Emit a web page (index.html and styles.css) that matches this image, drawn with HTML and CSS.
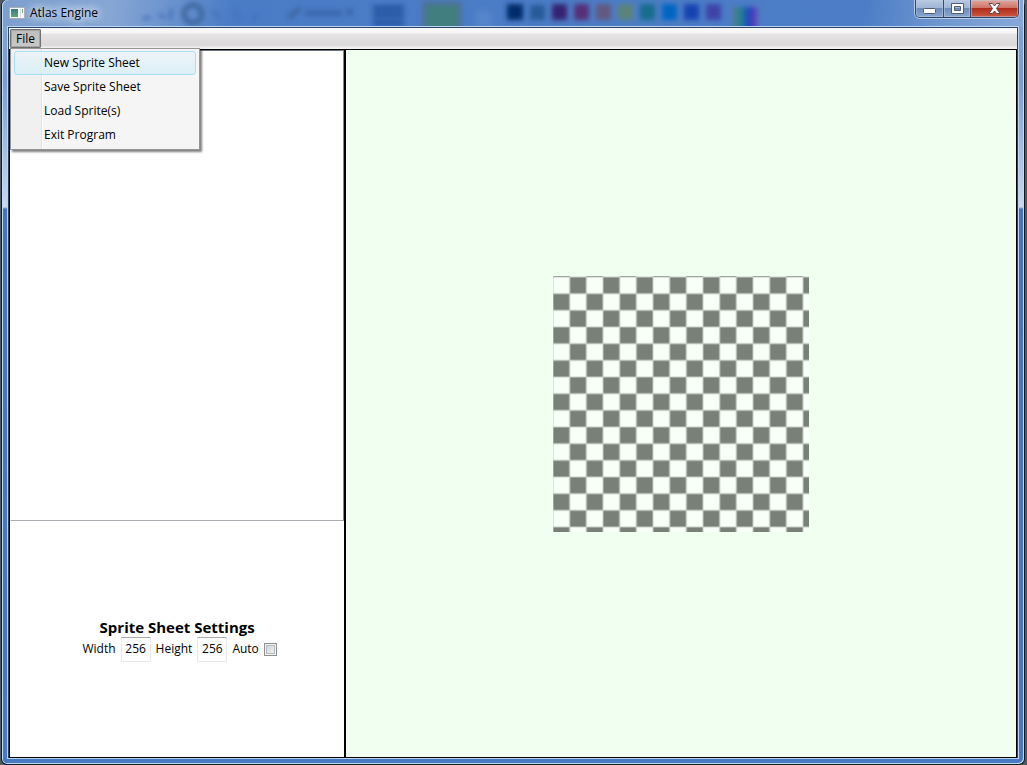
FILE: index.html
```html
<!DOCTYPE html>
<html lang="en">
<head>
<meta charset="utf-8">
<title>Atlas Engine</title>
<link rel="stylesheet" href="styles.css">
</head>
<body>
<div class="window">
  <header class="titlebar">
    <svg class="glass" width="1027" height="26" aria-hidden="true">
      <defs>
        <filter id="soft" x="-20%" y="-50%" width="140%" height="200%"><feGaussianBlur stdDeviation="2.500"/></filter>
        <linearGradient id="rainbow">
          <stop offset="0" stop-color="#5b7590"/><stop offset=".3" stop-color="#23858f"/>
          <stop offset=".6" stop-color="#174bc0"/><stop offset=".8" stop-color="#4a35bd"/><stop offset="1" stop-color="#6a62bd"/>
        </linearGradient>
      </defs>
      <g filter="url(#soft)">
        <circle cx="193" cy="14" r="9" fill="none" stroke="#3d689f" stroke-width="5"/>
        <path d="M142 18h9M158 14l8 4M171 8v12M212 10l9 9M234 10l5 9M251 17h8" stroke="#4370b6" stroke-width="3"/>
        <path d="M289 18l11-10" stroke="#3a639b" stroke-width="4"/>
        <path d="M305 13h37M346 12h7" stroke="#3b66ac" stroke-width="6"/>
        <path d="M373 8h31M373 15h31M373 23h31" stroke="#2859a4" stroke-width="6"/>
        <rect x="424" y="3" width="36" height="28" fill="#3f7f7e" stroke="#50719b" stroke-width="4"/>
        <rect x="476" y="10" width="16" height="18" fill="#5584ca"/>
        <rect x="507" y="4" width="16" height="16" fill="#002c6b"/>
        <rect x="530" y="5" width="15" height="15" fill="#285a98"/>
        <rect x="552" y="4" width="15" height="16" fill="#35246f"/>
        <rect x="574" y="4" width="15" height="16" fill="#592f78"/>
        <rect x="596" y="4" width="15" height="16" fill="#63597e"/>
        <rect x="618" y="4" width="15" height="16" fill="#5c8377"/>
        <rect x="640" y="4" width="15" height="16" fill="#126d8c"/>
        <rect x="662" y="4" width="15" height="16" fill="#0565c3"/>
        <rect x="684" y="4" width="15" height="16" fill="#1943b3"/>
        <rect x="706" y="4" width="15" height="16" fill="#3c43a8"/>
        <rect x="733" y="7" width="25" height="24" fill="url(#rainbow)"/>
      </g>
    </svg>
    <svg class="app-icon" width="16" height="12" viewBox="0 0 16 12" aria-hidden="true">
      <defs><linearGradient id="app" x2="0" y2="1"><stop stop-color="#347a8b"/><stop offset="1" stop-color="#60a770"/></linearGradient></defs>
      <rect x=".5" y=".5" width="15" height="11" fill="#f7f8f8" stroke="#a8b0b5"/>
      <rect x="2" y="2" width="7" height="8" fill="url(#app)"/>
      <path d="M11 2h1v8h-1z" fill="#d4dce0"/><path d="M13 2h1v4h-1z" fill="#7daf91"/>
    </svg>
    <h1 class="title">Atlas Engine</h1>
    <div class="caption">
      <button class="cap min" aria-label="Minimize"><svg width="13" height="6"><rect x=".5" y=".5" width="12" height="5" rx="1" fill="#fff" stroke="#545c72"/></svg></button>
      <button class="cap max" aria-label="Maximize"><svg width="13" height="11"><path d="M.5.5h12v10H.5zM3.500 3.500v4h6v-4z" fill="#fff" fill-rule="evenodd" stroke="#545c72"/></svg></button>
      <button class="cap close" aria-label="Close"><svg width="13" height="11"><path d="M1 .5h3.500L6.500 3l2-2.500H12L8.500 5.500l3.500 5H8.500l-2-2.500-2 2.500H1l3.500-5z" fill="#fff" stroke="#5e4650"/></svg></button>
    </div>
  </header>
  <div class="client">
    <nav class="menubar">
      <button class="file" aria-expanded="true" aria-haspopup="menu">File</button>
      <div class="menu" role="menu">
        <button class="item active" role="menuitem">New Sprite Sheet</button>
        <button class="item" role="menuitem">Save Sprite Sheet</button>
        <button class="item" role="menuitem">Load Sprite(s)</button>
        <button class="item" role="menuitem">Exit Program</button>
      </div>
    </nav>
    <main class="workspace">
      <aside class="side">
        <div class="sprites"></div>
        <form class="settings">
          <h2 class="heading">Sprite Sheet Settings</h2>
          <div class="fields">
            <label for="w">Width</label><input class="num" id="w" type="text" value="256">
            <label for="h">Height</label><input class="num" id="h" type="text" value="256">
            <label for="auto">Auto</label><input class="check" id="auto" type="checkbox">
          </div>
        </form>
      </aside>
      <section class="canvas">
        <svg class="sheet" width="256" height="256" viewBox="0 0 256 256" role="img" aria-label="Empty sprite sheet">
          <defs>
            <pattern id="checks" width="33.333" height="33.333" y="1" patternUnits="userSpaceOnUse">
              <rect width="33.333" height="33.333" fill="#f8fff8"/>
              <path d="M16.667 0h16.667v16.667H16.667zM0 16.667h16.667v16.667H0z" fill="#788078"/>
              <path d="M0 0h33.333M0 16.667h33.333M0 0v33.333M16.667 0v33.333M33.333 0v33.333M0 33.333h33.333" stroke="#c5cdc5"/>
            </pattern>
          </defs>
          <rect width="256" height="256" fill="url(#checks)"/>
        </svg>
      </section>
    </main>
  </div>
</div>
</body>
</html>
```
FILE: styles.css
```css
* { box-sizing: border-box; }
body {
  margin: 0;
  height: 100vh;
  overflow: hidden;
  background: #4f5a62;
  color: #000;
  font: 12px/16px "Open Sans", "Noto Sans", sans-serif;
}
button, input { font: inherit; color: inherit; }
h1, h2 { margin: 0; }
.window {
  height: 100vh;
  margin: 0 2px 0 1px;
  display: flex;
  flex-direction: column;
  padding: 0 6px 6px;
  border: 1px solid #111a26;
  border-top: 0;
  border-radius: 6px;
  box-shadow: inset 1px 0 #c3dbf3, inset -1px -1px #c3dbf3;
  background: linear-gradient(#84a6d6 0, #789cd2 80px, #c9d9ef 207px, #4476c0 209px, #4779c3 100%);
}
.titlebar {
  position: relative;
  flex: 0 0 26px;
  display: flex;
  align-items: center;
  margin: 0 -6px;
  padding: 0 5px 0 7px;
  border-top-left-radius: 6px;
  overflow: hidden;
  box-shadow: inset 1px 0 #c3dbf3, inset -1px 0 #c3dbf3;
  background: linear-gradient(100deg, #7d9fcf 0, #86a6d4 110px, #6e95cf 160px, #4a7bc5 230px, #4c7dc6 850px, #7097d0 930px, #87a8d8 100%);
}
.glass { position: absolute; left: -2px; top: 0; }
.app-icon { position: relative; }
.title {
  position: relative;
  flex: 1;
  margin-left: 5px;
  font-size: 12px;
  font-weight: 400;
  text-shadow: 0 0 8px #dfe9f6, 0 0 8px #dfe9f6, 0 0 12px #dfe9f6;
}
.caption {
  position: relative;
  align-self: flex-start;
  display: flex;
  height: 18px;
  border: 1px solid #2d4468;
  border-top: 0;
  border-radius: 0 0 5px 5px;
  box-shadow: 0 0 0 1px #b4cbe8;
  overflow: hidden;
}
.cap {
  display: flex;
  align-items: center;
  justify-content: center;
  width: 27px;
  padding: 0;
  border: 0;
  border-right: 1px solid #334d77;
  box-shadow: inset 0 0 0 1px #bccde680;
  background: linear-gradient(#b7c8e0 0, #9fb6d8 45%, #6d8cba 50%, #8aa7d0 100%);
}
.min { width: 28px; padding-top: 4px; }
.close {
  width: 47px;
  border-right: 0;
  background: linear-gradient(#e3a69c 0, #cf7567 45%, #b02d1c 50%, #cd5a42 100%);
}
.client {
  flex: 1;
  min-height: 0;
  display: flex;
  flex-direction: column;
  border: 1px solid #2a4468;
  border-bottom: 0;
  box-shadow: 0 0 0 1px #bdd5f0;
  margin-top: 1px;
}
.menubar {
  position: relative;
  flex: 0 0 21px;
  display: flex;
  padding: 1px;
  background: linear-gradient(#f7f7f7 0 5px, #e6e4e5 6px, #dad8d9 17px, #f4f4f4 20px);
}
.file {
  height: 19px;
  padding: 0 5px;
  border: 1px solid #707070;
  border-radius: 1px;
  box-shadow: inset 0 0 0 1px #a5a5a5;
  background: linear-gradient(#bdbdbd, #c9c9c9);
}
.menu {
  position: absolute;
  z-index: 2;
  left: 1px;
  top: 20px;
  width: 190px;
  padding: 2px 3px;
  border: 1px solid #959595;
  box-shadow: 2px 2px 2px #00000080;
  background: linear-gradient(90deg, #f0f0f0 30px, #e2e2e2 30px 31px, #fff 31px 32px, #f5f5f5 32px);
}
.item {
  display: block;
  width: 100%;
  height: 24px;
  padding: 0 0 0 29px;
  border: 1px solid transparent;
  border-radius: 3px;
  background: none;
  text-align: left;
}
.active {
  border-color: #aadff2;
  background: linear-gradient(#ebf4f9cc, #d5edf7cc);
}
.workspace {
  flex: 1;
  min-height: 0;
  display: grid;
  grid-template-columns: 1fr 2fr;
  border: 1px solid #000;
}
.side {
  display: grid;
  grid-template-rows: 2fr 1fr;
  border-right: 1px solid #000;
  background: #fff;
}
.sprites { border: 1px solid #828790; border-color: #6b7480 #828790 #abadb3 #fff; }
.settings {
  display: flex;
  flex-direction: column;
  align-items: center;
  justify-content: center;
}
.heading { font-size: 15px; line-height: 20px; font-weight: 700; }
.fields { display: flex; align-items: center; gap: 5px; margin-left: 5px; }
.num {
  width: 30px;
  height: 25px;
  padding: 0 0 2px;
  border: 1px solid #e3e9ef;
  border-top-color: #abadb3;
  border-radius: 1px;
  background: #fff;
  text-align: center;
}
.check {
  appearance: none;
  width: 13px;
  height: 13px;
  margin: 0;
  border: 1px solid #8e8f8f;
  box-shadow: inset 0 0 0 1px #f4f4f4, inset 0 0 0 2px #b5bac1;
  background: linear-gradient(135deg, #cbcfd5, #f6f6f6);
}
.canvas {
  display: flex;
  align-items: center;
  justify-content: center;
  border-left: 1px solid #000;
  background: #f0fff0;
}
.sheet { display: block; }
```
